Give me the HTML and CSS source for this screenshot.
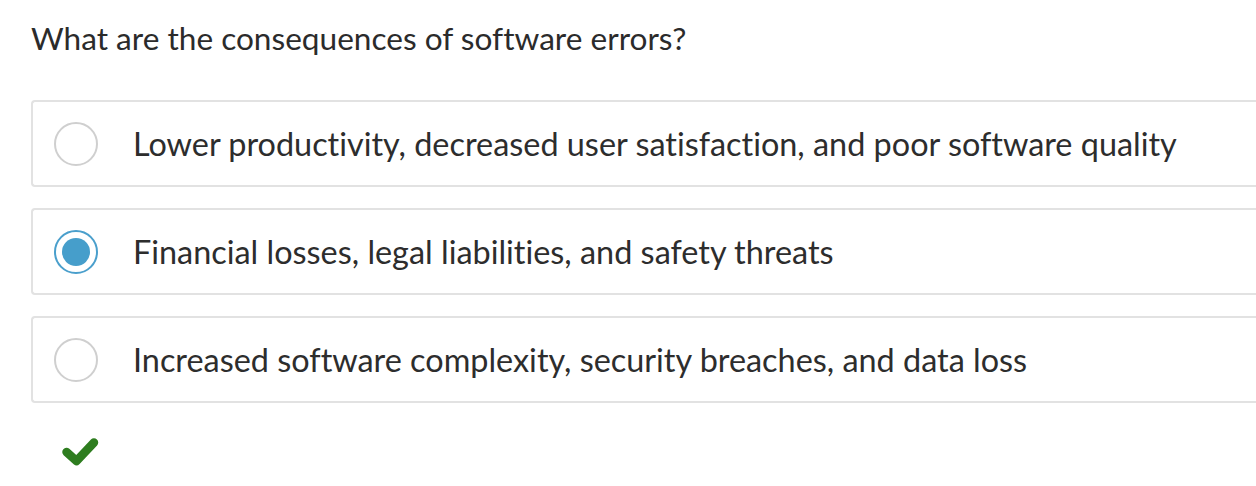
FILE: index.html
```html
<!DOCTYPE html>
<html>
<head>
<meta charset="utf-8">
<link rel="stylesheet" href="styles.css">
</head>
<body>
<div class="quiz">
  <div class="question">What are the consequences of software errors?</div>
  <div class="options">
    <label class="option">
      <span class="radio"></span>
      <span class="text">Lower productivity, decreased user satisfaction, and poor software quality</span>
    </label>
    <label class="option">
      <span class="radio checked"></span>
      <span class="text">Financial losses, legal liabilities, and safety threats</span>
    </label>
    <label class="option">
      <span class="radio"></span>
      <span class="text">Increased software complexity, security breaches, and data loss</span>
    </label>
  </div>
  <div class="result">
    <svg class="check" width="40" height="32" viewBox="0 0 40 32">
      <path d="M6.5 17 L16.5 26 L34 7.5" fill="none" stroke="#2e7d1f" stroke-width="8.5" stroke-linecap="round" stroke-linejoin="round"/>
    </svg>
  </div>
</div>
</body>
</html>
```
FILE: styles.css
```css
html, body {
  margin: 0;
  padding: 0;
  background: #ffffff;
  overflow: hidden;
}
.quiz {
  width: 1256px;
  height: 486px;
  overflow: hidden;
  padding: 18px 0 0 31px;
  box-sizing: border-box;
  font-family: "Lato", "Open Sans", sans-serif;
  font-variant-ligatures: none;
  color: #333333;
}
.question {
  font-size: 31.6px;
  line-height: 40px;
  height: 82px;
  color: #2b2b2b;
}
.options {
  display: flex;
  flex-direction: column;
  gap: 21px;
  width: 1260px;
}
.option {
  display: flex;
  align-items: center;
  height: 87px;
  box-sizing: border-box;
  border: 2px solid #e2e2e2;
  border-right: none;
  border-radius: 4px 0 0 4px;
  padding-left: 21px;
}
.radio {
  width: 44px;
  height: 44px;
  box-sizing: border-box;
  border: 2px solid #cfcfcf;
  border-radius: 50%;
  flex: none;
  display: flex;
  align-items: center;
  justify-content: center;
  margin-right: 35px;
}
.radio.checked {
  border-color: #4a9fcc;
}
.radio.checked::after {
  content: "";
  width: 28px;
  height: 28px;
  border-radius: 50%;
  background: #469ecb;
}
.text {
  font-size: 32.4px;
  color: #2d2d2d;
  white-space: nowrap;
}
.result {
  padding: 32px 0 0 29px;
}
.check {
  display: block;
}
```
